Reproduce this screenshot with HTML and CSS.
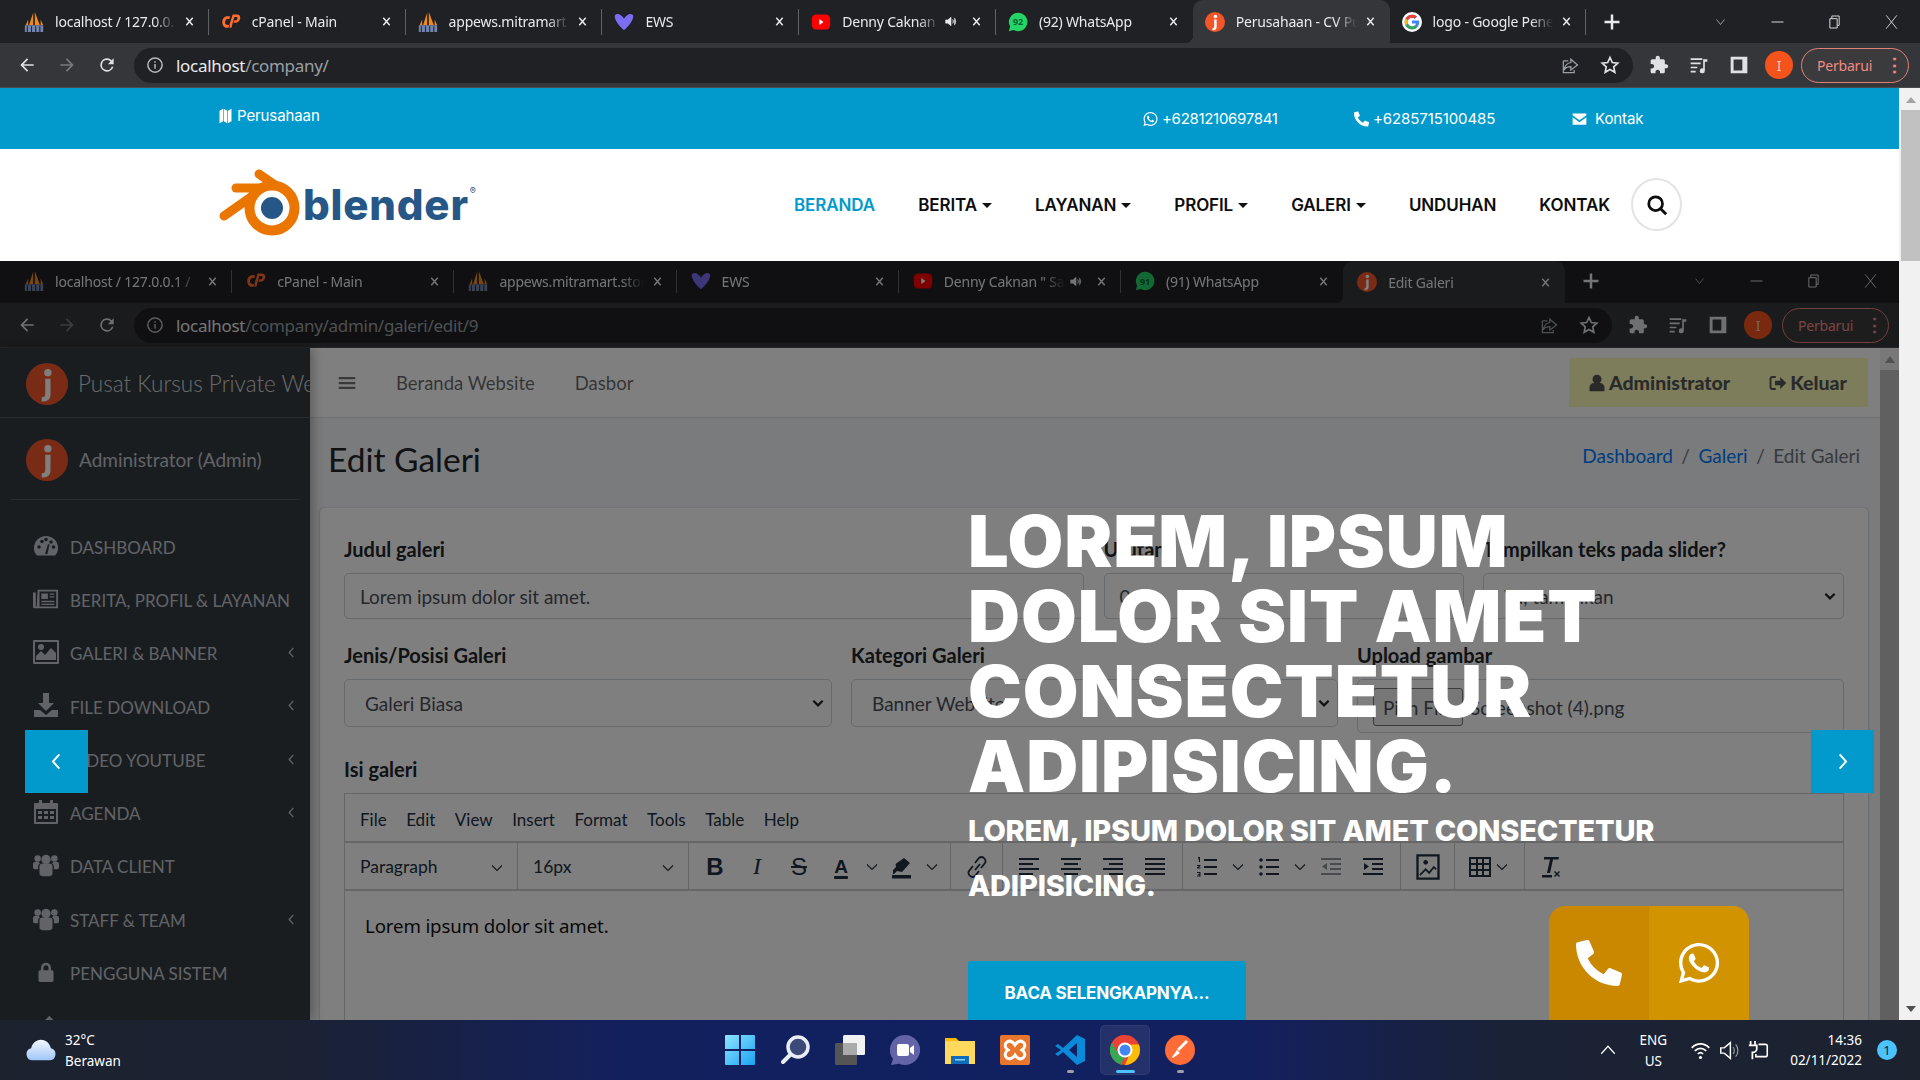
FILE: index.html
```html
<!DOCTYPE html>
<html lang="id">
<head>
<meta charset="utf-8">
<title>Perusahaan - CV</title>
<link rel="stylesheet" href="styles.css">
</head>
<body>
<svg class="sprite" aria-hidden="true">
  <symbol id="back" viewBox="0 0 24 24"><path d="M20 11H7.8l5.6-5.6L12 4l-8 8 8 8 1.4-1.4L7.8 13H20z"/></symbol>
  <symbol id="fwd" viewBox="0 0 24 24"><path d="M12 4l-1.4 1.4 5.6 5.6H4v2h12.2l-5.6 5.6L12 20l8-8z"/></symbol>
  <symbol id="reload" viewBox="0 0 24 24"><path d="M17.65 6.35A8 8 0 1 0 19.73 14h-2.08A6 6 0 1 1 12 6c1.66 0 3.14.69 4.22 1.78L13 11h7V4z"/></symbol>
  <symbol id="info" viewBox="0 0 24 24"><circle cx="12" cy="12" r="9.5" fill="none" stroke="currentColor" stroke-width="2"/><path d="M11 10.500h2V17h-2zM11 7h2v2h-2z"/></symbol>
  <symbol id="share" viewBox="0 0 24 24"><path d="M13 9V5l8 7-8 6v-4c-4 0-6.500 1-8 4 .5-5 3-8 8-9zM4 7h6M4 7v14h13v-3" fill="none" stroke="currentColor" stroke-width="1.500"/></symbol>
  <symbol id="star" viewBox="0 0 24 24"><path d="M12 3l2.800 6 6.600.8-4.900 4.500 1.300 6.500L12 17.500l-5.800 3.300 1.300-6.500L2.600 9.800 9.200 9z" fill="none" stroke="currentColor" stroke-width="2"/></symbol>
  <symbol id="puzzle" viewBox="0 0 24 24"><path d="M20.500 11H19V7c0-1.100-.9-2-2-2h-4V3.500C13 2.120 11.880 1 10.500 1S8 2.120 8 3.500V5H4c-1.100 0-1.990.9-1.990 2v3.800H3.500c1.490 0 2.700 1.210 2.700 2.700s-1.210 2.700-2.700 2.700H2V20c0 1.100.9 2 2 2h3.800v-1.500c0-1.490 1.210-2.700 2.700-2.700s2.700 1.210 2.700 2.700V22H17c1.100 0 2-.9 2-2v-4h1.500c1.380 0 2.500-1.120 2.500-2.500S21.880 11 20.500 11z"/></symbol>
  <symbol id="media" viewBox="0 0 24 24"><path d="M2 4h14v2H2zM2 9h12v2H2zM2 14h8v2H2zM2 19h6v2H2zM17 5h5v3h-3v11a3 3 0 1 1-2-2.800z"/></symbol>
  <symbol id="panel" viewBox="0 0 24 24"><path d="M2 2h20v20H2zM5.500 5.500v13H16v-13z" fill-rule="evenodd"/></symbol>
  <symbol id="chev-d" viewBox="0 0 24 24"><path d="M4 7l8 10 8-10" fill="none" stroke="currentColor" stroke-width="1.300"/></symbol>
  <symbol id="sel-d" viewBox="0 0 24 24"><path d="M4 8l8 8 8-8" fill="none" stroke="currentColor" stroke-width="3.800"/></symbol>
  <symbol id="minim" viewBox="0 0 24 24"><path d="M3 12h18" stroke="currentColor" stroke-width="1.500"/></symbol>
  <symbol id="maxim" viewBox="0 0 24 24"><path d="M5 7h11v14H5zM8 7V3h11v14h-3" fill="none" stroke="currentColor" stroke-width="1.500"/></symbol>
  <symbol id="xclose" viewBox="0 0 24 24"><path d="M4 2l16 20M20 2L4 22" fill="none" stroke="currentColor" stroke-width="1.400"/></symbol>
  <symbol id="tabx" viewBox="0 0 24 24"><path d="M5 4l14 16M19 4L5 20" fill="none" stroke="currentColor" stroke-width="3.200"/></symbol>
  <symbol id="plus" viewBox="0 0 24 24"><path d="M12 3v18M3 12h18" fill="none" stroke="currentColor" stroke-width="3"/></symbol>
  <symbol id="speaker" viewBox="0 0 24 24"><path d="M3 9h4l6-5v16l-6-5H3zM16 8c2 2 2 6 0 8M19 5c3.500 4 3.500 10 0 14" fill="currentColor" stroke="currentColor" stroke-width="1"/></symbol>

  <symbol id="pma" viewBox="0 0 24 24"><path d="M6 16L11 1v15zM13 0l6 16h-6zM2 16l3-7v7zM20 9l3 7h-3z" fill="#f08a1d"/><path d="M1 16h22v8H1z" fill="#7484ad"/><path d="M4 24v-7M9 24v-7M14 24v-7M19 24v-7" stroke="#23262e" stroke-width="1.300"/></symbol>
  <symbol id="cpanel" viewBox="0 0 24 24"><path d="M11 5H7.500C4 5 1.500 8 1.500 12s2 7 6 7H10l1-3.500H8c-3 0-3.500-2-3-4s1.500-3 3-3h2zM14 3h5c3.500 0 4.500 2.500 4 5s-2.500 5-6 5h-2l1-3h1.500c1.500 0 2-1 2.200-2s0-2-1.200-2h-2.500l-3.500 13H9z" fill="#ff6c2c"/></symbol>
  <symbol id="ews" viewBox="0 0 24 24"><path d="M1 4c3-3 7-2 11 4 4-6 8-7 11-4 1 5-5 13-11 18C6 17 0 9 1 4z" fill="#7b6cf0"/></symbol>
  <symbol id="yt" viewBox="0 0 24 24"><rect x="1" y="3" width="22" height="18" rx="5" fill="#f00"/><path d="M10 8.500l5 3.500-5 3.500z" fill="#fff"/></symbol>
  <symbol id="wa92" viewBox="0 0 24 24"><path d="M12 1a11 11 0 0 0-9.500 16.500L1 23l5.700-1.500A11 11 0 1 0 12 1z" fill="#25d366"/></symbol>
  <symbol id="jico" viewBox="0 0 24 24"><circle cx="12" cy="12" r="12" fill="#f4562a"/><circle cx="12.500" cy="5.500" r="2.100" fill="#fff"/><path d="M11 9h3v9c0 3-2 4-5 4v-2.500c1.500 0 2-.5 2-2z" fill="#fff"/></symbol>
  <symbol id="gg" viewBox="0 0 48 48"><circle cx="24" cy="24" r="24" fill="#fff"/><path d="M41 20.500H24v7h9.700C32.800 32 29 34.500 24 34.500c-6 0-10.500-4.800-10.500-10.500S18 13.500 24 13.500c2.700 0 5 1 6.800 2.500l5.200-5.200C32.800 8 28.700 6.500 24 6.500 14.300 6.500 6.500 14.300 6.500 24S14.300 41.500 24 41.500c9 0 17.500-6.500 17.500-17.500 0-1.200-.2-2.400-.5-3.500z" fill="#4285f4"/><path d="M8.500 15.500l5.800 4.300C16 16 19.700 13.500 24 13.500c2.700 0 5 1 6.800 2.500l5.200-5.200C32.800 8 28.700 6.500 24 6.500c-6.800 0-12.600 3.800-15.500 9z" fill="#ea4335"/><path d="M24 41.500c4.500 0 8.700-1.700 11.800-4.600l-5.500-4.600c-1.700 1.300-3.900 2.200-6.300 2.200-4.600 0-8.500-3-9.900-7.200l-5.800 4.500c2.900 5.900 8.900 9.700 15.700 9.700z" fill="#34a853"/><path d="M8.500 15.500A17.400 17.400 0 0 0 8.300 31.800l5.800-4.500a10.400 10.400 0 0 1 .2-7.500z" fill="#fbbc05"/></symbol>

  <symbol id="map" viewBox="0 0 18 24"><path d="M0 4l5.500-3v19L0 23zM6.500 1L11.500 4v19l-5-3zM12.500 4L18 1v19l-5.500 3z"/></symbol>
  <symbol id="wa" viewBox="0 0 448 512"><path d="M380.900 97.100C339 55.100 283.200 32 223.900 32c-122.400 0-222 99.600-222 222 0 39.100 10.200 77.300 29.600 111L0 480l117.700-30.900c32.400 17.700 68.900 27 106.100 27h.1c122.300 0 224.100-99.600 224.100-222 0-59.300-25.200-115-67.100-157zm-157 341.600c-33.200 0-65.700-8.900-94-25.700l-6.700-4-69.800 18.300L72 359.200l-4.400-7c-18.500-29.400-28.200-63.300-28.200-98.200 0-101.700 82.800-184.500 184.600-184.500 49.300 0 95.600 19.200 130.400 54.100 34.800 34.900 56.200 81.200 56.100 130.500 0 101.800-84.900 184.600-186.600 184.600zm101.200-138.200c-5.500-2.800-32.800-16.200-37.900-18-5.100-1.900-8.800-2.800-12.500 2.800-3.700 5.600-14.300 18-17.600 21.800-3.200 3.700-6.500 4.200-12 1.400-32.600-16.300-54-29.100-75.500-66-5.700-9.800 5.700-9.100 16.300-30.300 1.800-3.700.9-6.900-.5-9.700-1.400-2.800-12.500-30.100-17.100-41.200-4.500-10.800-9.100-9.300-12.500-9.500-3.200-.2-6.900-.2-10.600-.2-3.700 0-9.700 1.400-14.800 6.900-5.100 5.600-19.400 19-19.400 46.300 0 27.300 19.900 53.700 22.600 57.400 2.800 3.700 39.100 59.700 94.800 83.800 35.200 15.200 49 16.500 66.600 13.900 10.700-1.600 32.800-13.400 37.400-26.400 4.600-13 4.600-24.100 3.200-26.400-1.300-2.500-5-3.900-10.500-6.600z"/></symbol>
  <symbol id="phone" viewBox="0 0 512 512"><path transform="matrix(-1 0 0 1 512 0)" d="M493.400 24.600l-104-24c-11.300-2.600-22.900 3.300-27.500 13.900l-48 112c-4.200 9.800-1.400 21.300 6.900 28l60.600 49.600c-36 76.700-98.900 140.500-177.200 177.200l-49.600-60.600c-6.800-8.300-18.200-11.100-28-6.900l-112 48C3.900 366.500-2 378.100.6 389.400l24 104C27.100 504.200 36.700 512 48 512c256.100 0 464-207.500 464-464 0-11.200-7.700-20.900-18.600-23.400z"/></symbol>
  <symbol id="mail" viewBox="0 0 24 24"><path d="M1 3h22v3L12 14 1 6zM1 9l11 8 11-8v12H1z"/></symbol>
  <symbol id="search" viewBox="0 0 24 24"><circle cx="10.500" cy="10.500" r="7.500" fill="none" stroke="currentColor" stroke-width="3"/><path d="M16 16l6 6" stroke="currentColor" stroke-width="3.200"/></symbol>
  <symbol id="chev-l" viewBox="0 0 24 24"><path d="M16 2L7 12l9 10" fill="none" stroke="currentColor" stroke-width="2.800"/></symbol>
  <symbol id="chev-r" viewBox="0 0 24 24"><path d="M8 2l9 10-9 10" fill="none" stroke="currentColor" stroke-width="2.800"/></symbol>
  <symbol id="hamb" viewBox="0 0 24 24"><path d="M1 4h22v3H1zM1 10.500h22v3H1zM1 17h22v3H1z"/></symbol>
  <symbol id="user" viewBox="0 0 24 24"><circle cx="12" cy="7" r="6"/><path d="M2 23v-5c0-4 3-6 6-6h8c3 0 6 2 6 6v5z"/></symbol>
  <symbol id="logout" viewBox="0 0 24 24"><path d="M9 4H5a3 3 0 0 0-3 3v10a3 3 0 0 0 3 3h4" fill="none" stroke="currentColor" stroke-width="2.500"/><path d="M8 9h7V4l8 8-8 8v-5H8z"/></symbol>

  <symbol id="s-gauge" viewBox="0 0 24 24"><path d="M12 2A12 12 0 0 0 0 14c0 3 1 5.500 3 7.500h18c2-2 3-4.500 3-7.500A12 12 0 0 0 12 2z"/><g fill="#343a40"><circle cx="5" cy="13" r="1.800"/><circle cx="8" cy="7.500" r="1.800"/><circle cx="12" cy="5.500" r="1.800"/><circle cx="17" cy="8" r="1.800"/><circle cx="19.500" cy="13" r="1.800"/><path d="M11 20l3-10 1.500.5-2 9.500z"/></g></symbol>
  <symbol id="s-news" viewBox="0 0 28 24"><path d="M5 2h22v20H2a2 2 0 0 1-2-2V5h3v15h1z M7 4v16h18V4z" fill-rule="evenodd"/><path d="M9 6h7v6H9zM18 6h5v1.500h-5zM18 9h5v1.500h-5zM9 14h14v1.500H9zM9 17h14v1.500H9z"/></symbol>
  <symbol id="s-img" viewBox="0 0 26 24"><path d="M1 0h24a1 1 0 0 1 1 1v22a1 1 0 0 1-1 1H1a1 1 0 0 1-1-1V1a1 1 0 0 1 1-1zM2 2v20h22V2z" fill-rule="evenodd"/><circle cx="8" cy="7" r="3"/><path d="M3 20v-4l5-5 4 4 6-7 5 5v7z"/></symbol>
  <symbol id="s-dl" viewBox="0 0 24 24"><path d="M9 0h6v10h5l-8 8-8-8h5zM0 17h6l6 5 6-5h6v7H0z"/></symbol>
  <symbol id="s-yt" viewBox="0 0 24 24"><rect y="3" width="24" height="18" rx="4"/></symbol>
  <symbol id="s-cal" viewBox="0 0 24 24"><path d="M5 0h3v3h8V0h3v3h4a1 1 0 0 1 1 1v19a1 1 0 0 1-1 1H1a1 1 0 0 1-1-1V4a1 1 0 0 1 1-1h4zM2 9v13h20V9z" fill-rule="evenodd"/><path d="M4 11h4v3H4zM10 11h4v3h-4zM16 11h4v3h-4zM4 16h4v3H4zM10 16h4v3h-4zM16 16h4v3h-4z"/></symbol>
  <symbol id="s-users" viewBox="0 0 28 24"><circle cx="14" cy="6" r="5"/><circle cx="5" cy="5" r="3.500"/><circle cx="23" cy="5" r="3.500"/><path d="M7 13c0-1.500 1.500-2.500 3-2.500h8c1.500 0 3 1 3 2.500v8c0 2-1 3-3 3h-8c-2 0-3-1-3-3zM0 11c0-1.500 1-2.500 2.500-2.500H6c.5 1 1 1.500 1.500 2-1 .5-2 1.500-2 3v3H2a2 2 0 0 1-2-2zM28 11c0-1.500-1-2.500-2.500-2.500H22c-.5 1-1 1.500-1.500 2 1 .5 2 1.500 2 3v3H26a2 2 0 0 0 2-2z"/></symbol>
  <symbol id="s-lock" viewBox="0 0 24 24"><path d="M6 10V7a6 6 0 0 1 12 0v3h1a2 2 0 0 1 2 2v10a2 2 0 0 1-2 2H5a2 2 0 0 1-2-2V12a2 2 0 0 1 2-2zm3 0h6V7a3 3 0 0 0-6 0z"/></symbol>
  <symbol id="s-pen" viewBox="0 0 24 24"><path d="M16 1l7 7L8 23H1v-7z"/></symbol>

  <symbol id="e-chev" viewBox="0 0 12 12"><path d="M1 3.500l5 5 5-5" fill="none" stroke="currentColor" stroke-width="1.100"/></symbol>
  <symbol id="e-hl" viewBox="0 0 24 24"><path d="M14 3l6 5-8 9-5-1-3 3h-1v-4l3-3-.5-3z"/><path d="M2 20h19v3.500H2z"/></symbol>
  <symbol id="e-link" viewBox="0 0 24 24"><path d="M10 15l5-6M8 11l-4 5a4 4 0 0 0 6 5l4-5M16 13l4-5a4 4 0 0 0-6-5l-4 5" fill="none" stroke="currentColor" stroke-width="1.800"/></symbol>
  <symbol id="e-al" viewBox="0 0 24 24"><path d="M2 3h20v2H2zM2 8h14v2H2zM2 13h20v2H2zM2 18h14v2H2z"/></symbol>
  <symbol id="e-ac" viewBox="0 0 24 24"><path d="M2 3h20v2H2zM5 8h14v2H5zM2 13h20v2H2zM5 18h14v2H5z"/></symbol>
  <symbol id="e-ar" viewBox="0 0 24 24"><path d="M2 3h20v2H2zM8 8h14v2H8zM2 13h20v2H2zM8 18h14v2H8z"/></symbol>
  <symbol id="e-aj" viewBox="0 0 24 24"><path d="M2 3h20v2H2zM2 8h20v2H2zM2 13h20v2H2zM2 18h20v2H2z"/></symbol>
  <symbol id="e-ol" viewBox="0 0 24 24"><path d="M9 4h13v2H9zM9 11h13v2H9zM9 18h13v2H9zM3 2h2v5H3.800V3.500H3zM2 10h3.500v1L3.500 12.500H5.500v1H2v-1l2-1.500H2zM2 17h3.500v4.500H2v-1h2.300v-.8H3v-.8h1.300V18H2z"/></symbol>
  <symbol id="e-ul" viewBox="0 0 24 24"><path d="M9 4h13v2H9zM9 11h13v2H9zM9 18h13v2H9z"/><circle cx="4" cy="5" r="1.800"/><circle cx="4" cy="12" r="1.800"/><circle cx="4" cy="19" r="1.800"/></symbol>
  <symbol id="e-out" viewBox="0 0 24 24"><path d="M2 3h20v2H2zM11 8h11v2H11zM11 13h11v2H11zM2 18h20v2H2zM8 8v7l-5-3.500z"/></symbol>
  <symbol id="e-in" viewBox="0 0 24 24"><path d="M2 3h20v2H2zM11 8h11v2H11zM11 13h11v2H11zM2 18h20v2H2zM3 8v7l5-3.500z"/></symbol>
  <symbol id="e-img" viewBox="0 0 24 24"><path d="M2 1h20v22H2zM4 3v18h16V3z" fill-rule="evenodd"/><circle cx="10" cy="8" r="2"/><path d="M5 19l5-5 3 3 4-5 2 2" fill="none" stroke="currentColor" stroke-width="1.500"/></symbol>
  <symbol id="e-tbl" viewBox="0 0 24 24"><path d="M1 2h22v20H1zM3 4v4h5V4zm7 0v4h4V4zm6 0v4h5V4zM3 10v4h5v-4zm7 0v4h4v-4zm6 0v4h5v-4zM3 16v4h5v-4zm7 0v4h4v-4zm6 0v4h5v-4z" fill-rule="evenodd"/></symbol>
  <symbol id="e-clear" viewBox="0 0 24 24"><path d="M6 2h15l-.5 2.500H15L12 18h-3l3-13.500H6zM4 20h10v2.500H4zM17 16l2 2 2-2 1 1-2 2 2 2-1 1-2-2-2 2-1-1 2-2-2-2z"/></symbol>

  <symbol id="t-cloud" viewBox="0 0 32 24"><defs><linearGradient id="cl" x1="0" y1="0" x2="0" y2="1"><stop offset="0" stop-color="#f4f8ff"/><stop offset="1" stop-color="#9fc6f7"/></linearGradient></defs><path d="M7 23a6.500 6.500 0 0 1-1.500-12.800C6.500 5 10.500 1 16 1s9.500 4 10.500 9.200A6.500 6.500 0 0 1 25 23z" fill="url(#cl)"/></symbol>
  <symbol id="t-win" viewBox="0 0 30 30"><defs><linearGradient id="wb" x1="0" y1="0" x2="1" y2="1"><stop offset="0" stop-color="#8ee4ff"/><stop offset="1" stop-color="#1aa2f0"/></linearGradient></defs><path d="M0 1a1 1 0 0 1 1-1h13v14H0zM16 0h13a1 1 0 0 1 1 1v13H16zM0 16h14v14H1a1 1 0 0 1-1-1zM16 16h14v13a1 1 0 0 1-1 1H16z" fill="url(#wb)"/></symbol>
  <symbol id="t-search" viewBox="0 0 30 30"><circle cx="18" cy="12" r="10" fill="#3b4a78" stroke="#e8edf6" stroke-width="3.500"/><path d="M10 20l-7 7" stroke="#e8edf6" stroke-width="4" stroke-linecap="round"/></symbol>
  <symbol id="t-view" viewBox="0 0 30 30"><rect y="8" width="22" height="22" rx="1.500" fill="#555"/><rect x="8" width="22" height="20" rx="1.500" fill="#f1f1f1"/><rect x="8" y="8" width="14" height="12" fill="#aaa"/></symbol>
  <symbol id="t-chat" viewBox="0 0 30 30"><path d="M15 0a15 15 0 1 1-6 28.700L1 30l2-6A15 15 0 0 1 15 0z" fill="#6264a7"/><rect x="7" y="9" width="12" height="12" rx="2" fill="#fff"/><path d="M20 13l4-3v10l-4-3z" fill="#fff"/></symbol>
  <symbol id="t-folder" viewBox="0 0 30 30"><path d="M0 3h11l3 3h16v23H0z" fill="#ffb900"/><path d="M0 6h30v23H0z" fill="#ffd95c"/><path d="M6 21h18v8H6z" fill="#0f6cbd"/><path d="M10 24h10v1.500H10z" fill="#8fd0ff"/></symbol>
  <symbol id="t-xampp" viewBox="0 0 30 30"><rect width="30" height="30" rx="2" fill="#e8762c"/><path d="M7 7c3-2 6 0 8 3 2-3 5-5 8-3s2 6-1 8c3 2 4 6 1 8s-6 0-8-3c-2 3-5 5-8 3s-2-6 1-8c-3-2-4-6-1-8z" fill="none" stroke="#fff" stroke-width="3"/></symbol>
  <symbol id="t-vs" viewBox="0 0 30 30"><path d="M22 0l8 4v22l-8 4L8 17l-5 4-3-2 6-4-6-4 3-2 5 4zM22 8l-8 7 8 7z" fill="#0a8ad8"/></symbol>
  <symbol id="t-chrome" viewBox="0 0 30 30"><circle cx="15" cy="15" r="15" fill="#ea4335"/><path d="M15 30A15 15 0 0 1 2 7.500L9 20l6 1 1 0-6 9z" fill="#34a853"/><path d="M15 30c8 0 15-7 15-15 0-2-.5-4-1.200-5.500H15l6 6z" fill="#fbbc05"/><path d="M2 7.500L9 19l6-4V0A15 15 0 0 0 2 7.500z" fill="#ea4335"/><circle cx="15" cy="15" r="7.500" fill="#fff"/><circle cx="15" cy="15" r="5.500" fill="#4285f4"/></symbol>
  <symbol id="t-post" viewBox="0 0 30 30"><circle cx="15" cy="15" r="15" fill="#ff6c37"/><path d="M21 5l2 2-9 9-2-2zM12 15l3 3-7 5-1-1z" fill="#fff"/></symbol>
  <symbol id="t-up" viewBox="0 0 24 24"><path d="M3 17L12 7l9 10" fill="none" stroke="currentColor" stroke-width="1.600"/></symbol>
  <symbol id="t-wifi" viewBox="0 0 24 24"><path d="M2 9c6-6 14-6 20 0M5.500 12.500c4-4 9-4 13 0M9 16c2-2 4-2 6 0" fill="none" stroke="currentColor" stroke-width="2"/><circle cx="12" cy="20" r="1.800"/></symbol>
  <symbol id="t-vol" viewBox="0 0 24 24"><path d="M2 9h4l7-6v18l-7-6H2z" fill="none" stroke="currentColor" stroke-width="1.700"/><path d="M16 8c2 2 2 6 0 8M19 5c3.500 4 3.500 10 0 14" fill="none" stroke="currentColor" stroke-width="1.200" opacity=".6"/></symbol>
  <symbol id="t-bat" viewBox="0 0 24 24"><path d="M3 1v5M8 1v5M1 6h9v4a4 4 0 0 1-4 4H5v8" fill="none" stroke="currentColor" stroke-width="2"/><path d="M12 5h8a2 2 0 0 1 2 2v10a2 2 0 0 1-2 2H9v-3" fill="none" stroke="currentColor" stroke-width="1.800"/></symbol>
</svg>

<div class="desk">
  <header class="win win--outer">
    <div class="tabs tabs--outer">
      <div class="tab"><svg class="fav"><use href="#pma"/></svg><span class="tab-t">localhost / 127.0.0.1 / dbco</span><svg class="tab-x"><use href="#tabx"/></svg></div>
      <div class="tab"><svg class="fav"><use href="#cpanel"/></svg><span class="tab-t">cPanel - Main</span><svg class="tab-x"><use href="#tabx"/></svg></div>
      <div class="tab"><svg class="fav"><use href="#pma"/></svg><span class="tab-t">appews.mitramart.store</span><svg class="tab-x"><use href="#tabx"/></svg></div>
      <div class="tab"><svg class="fav"><use href="#ews"/></svg><span class="tab-t">EWS</span><svg class="tab-x"><use href="#tabx"/></svg></div>
      <div class="tab"><svg class="fav"><use href="#yt"/></svg><span class="tab-t">Denny Caknan " Satru</span><svg class="tab-s"><use href="#speaker"/></svg><svg class="tab-x"><use href="#tabx"/></svg></div>
      <div class="tab tab--nosep"><span class="fav-wa"><svg class="fav"><use href="#wa92"/></svg><span class="fav-num">92</span></span><span class="tab-t">(92) WhatsApp</span><svg class="tab-x"><use href="#tabx"/></svg></div>
      <div class="tab tab--active"><svg class="fav"><use href="#jico"/></svg><span class="tab-t">Perusahaan - CV Pusat</span><svg class="tab-x"><use href="#tabx"/></svg></div>
      <div class="tab"><svg class="fav"><use href="#gg"/></svg><span class="tab-t">logo - Google Penelusuran</span><svg class="tab-x"><use href="#tabx"/></svg></div>
      <svg class="tab-plus"><use href="#plus"/></svg>
      <div class="wctl"><svg class="wc wc--chev"><use href="#chev-d"/></svg><svg class="wc"><use href="#minim"/></svg><svg class="wc"><use href="#maxim"/></svg><svg class="wc"><use href="#xclose"/></svg></div>
    </div>
    <div class="bar">
      <svg class="bi"><use href="#back"/></svg><svg class="bi bi--off"><use href="#fwd"/></svg><svg class="bi"><use href="#reload"/></svg>
      <div class="omni"><svg class="omni-i"><use href="#info"/></svg><span class="url"><span class="url-h">localhost</span>/company/</span><svg class="omni-a"><use href="#share"/></svg><svg class="omni-b"><use href="#star"/></svg></div>
      <svg class="bi bi--ext"><use href="#puzzle"/></svg><svg class="bi"><use href="#media"/></svg><svg class="bi"><use href="#panel"/></svg>
      <span class="ava">I</span>
      <span class="pill">Perbarui<span class="dots">⋮</span></span>
    </div>
  </header>

  <div class="viewport">
    <main class="page">
      <div class="topbar">
        <span class="tb-brand"><svg class="tb-ic"><use href="#map"/></svg>Perusahaan</span>
        <span class="tb-item tb-item--wa"><svg class="tb-ic"><use href="#wa"/></svg>+6281210697841</span>
        <span class="tb-item tb-item--ph"><svg class="tb-ic"><use href="#phone"/></svg>+6285715100485</span>
        <span class="tb-item tb-item--ml"><svg class="tb-ic"><use href="#mail"/></svg>Kontak</span>
      </div>
      <nav class="nav">
        <div class="logo">
          <svg class="logo-mark" viewBox="0 0 84 72">
            <g fill="none" stroke="#ea7600" stroke-linecap="round" stroke-width="9">
              <path d="M40 5L66 23"/><path d="M17 19h30"/><path d="M5 47L32 28"/>
            </g>
            <path d="M30 20l30-1 10 24-40 0z" fill="#ea7600"/>
            <circle cx="53" cy="39" r="22.500" fill="#fff" stroke="#ea7600" stroke-width="10"/>
            <circle cx="53" cy="39" r="11" fill="#265787"/>
          </svg>
          <span class="logo-t">blender<sup class="logo-r">®</sup></span>
        </div>
        <ul class="menu">
          <li class="menu-i menu-i--on">BERANDA</li>
          <li class="menu-i">BERITA <span class="caret"></span></li>
          <li class="menu-i">LAYANAN<span class="caret"></span></li>
          <li class="menu-i">PROFIL<span class="caret"></span></li>
          <li class="menu-i">GALERI <span class="caret"></span></li>
          <li class="menu-i">UNDUHAN</li>
          <li class="menu-i">KONTAK</li>
        </ul>
        <span class="srch"><svg class="srch-i"><use href="#search"/></svg></span>
      </nav>

      <section class="hero">
        <div class="win win--inner">
          <div class="tabs tabs--inner">
            <div class="tab"><svg class="fav"><use href="#pma"/></svg><span class="tab-t">localhost / 127.0.0.1 /</span><svg class="tab-x"><use href="#tabx"/></svg></div>
            <div class="tab"><svg class="fav"><use href="#cpanel"/></svg><span class="tab-t">cPanel - Main</span><svg class="tab-x"><use href="#tabx"/></svg></div>
            <div class="tab"><svg class="fav"><use href="#pma"/></svg><span class="tab-t">appews.mitramart.store</span><svg class="tab-x"><use href="#tabx"/></svg></div>
            <div class="tab"><svg class="fav"><use href="#ews"/></svg><span class="tab-t">EWS</span><svg class="tab-x"><use href="#tabx"/></svg></div>
            <div class="tab"><svg class="fav"><use href="#yt"/></svg><span class="tab-t">Denny Caknan " Satru 2</span><svg class="tab-s"><use href="#speaker"/></svg><svg class="tab-x"><use href="#tabx"/></svg></div>
            <div class="tab tab--nosep"><span class="fav-wa"><svg class="fav"><use href="#wa92"/></svg><span class="fav-num">91</span></span><span class="tab-t">(91) WhatsApp</span><svg class="tab-x"><use href="#tabx"/></svg></div>
            <div class="tab tab--active"><svg class="fav"><use href="#jico"/></svg><span class="tab-t">Edit Galeri</span><svg class="tab-x"><use href="#tabx"/></svg></div>
            <svg class="tab-plus"><use href="#plus"/></svg>
            <div class="wctl"><svg class="wc wc--chev"><use href="#chev-d"/></svg><svg class="wc"><use href="#minim"/></svg><svg class="wc"><use href="#maxim"/></svg><svg class="wc"><use href="#xclose"/></svg></div>
          </div>
          <div class="bar">
            <svg class="bi"><use href="#back"/></svg><svg class="bi bi--off"><use href="#fwd"/></svg><svg class="bi"><use href="#reload"/></svg>
            <div class="omni"><svg class="omni-i"><use href="#info"/></svg><span class="url"><span class="url-h">localhost</span>/company/admin/galeri/edit/9</span><svg class="omni-a"><use href="#share"/></svg><svg class="omni-b"><use href="#star"/></svg></div>
            <svg class="bi bi--ext"><use href="#puzzle"/></svg><svg class="bi"><use href="#media"/></svg><svg class="bi"><use href="#panel"/></svg>
            <span class="ava">I</span>
            <span class="pill">Perbarui<span class="dots">⋮</span></span>
          </div>

          <div class="admin">
            <aside class="side">
              <div class="side-brand"><svg class="side-ava"><use href="#jico"/></svg><span class="side-name">Pusat Kursus Private Website</span></div>
              <div class="side-user"><svg class="side-ava"><use href="#jico"/></svg><span class="side-uname">Administrator (Admin)</span></div>
              <ul class="side-menu">
                <li class="sm"><svg class="sm-i"><use href="#s-gauge"/></svg>DASHBOARD</li>
                <li class="sm"><svg class="sm-i"><use href="#s-news"/></svg><span class="sm-clip">BERITA, PROFIL &amp; LAYANAN</span></li>
                <li class="sm"><svg class="sm-i"><use href="#s-img"/></svg>GALERI &amp; BANNER<svg class="sm-c"><use href="#chev-l"/></svg></li>
                <li class="sm"><svg class="sm-i"><use href="#s-dl"/></svg>FILE DOWNLOAD<svg class="sm-c"><use href="#chev-l"/></svg></li>
                <li class="sm"><svg class="sm-i"><use href="#s-yt"/></svg>VIDEO YOUTUBE<svg class="sm-c"><use href="#chev-l"/></svg></li>
                <li class="sm"><svg class="sm-i"><use href="#s-cal"/></svg>AGENDA<svg class="sm-c"><use href="#chev-l"/></svg></li>
                <li class="sm"><svg class="sm-i"><use href="#s-users"/></svg>DATA CLIENT</li>
                <li class="sm"><svg class="sm-i"><use href="#s-users"/></svg>STAFF &amp; TEAM<svg class="sm-c"><use href="#chev-l"/></svg></li>
                <li class="sm"><svg class="sm-i sm-i--s"><use href="#s-lock"/></svg>PENGGUNA SISTEM</li>
                <li class="sm"><svg class="sm-i sm-i--s"><use href="#s-pen"/></svg>KONFIGURASI</li>
              </ul>
            </aside>
            <div class="main">
              <div class="mnav">
                <svg class="mnav-h"><use href="#hamb"/></svg>
                <span class="mnav-l">Beranda Website</span>
                <span class="mnav-l">Dasbor</span>
                <div class="mnav-box">
                  <span class="mnav-b"><svg class="mnav-i"><use href="#user"/></svg>Administrator</span>
                  <span class="mnav-b"><svg class="mnav-i"><use href="#logout"/></svg>Keluar</span>
                </div>
              </div>
              <div class="chead">
                <h1 class="ctitle">Edit Galeri</h1>
                <div class="crumb"><span class="crumb-a">Dashboard</span><span class="crumb-s">/</span><span class="crumb-a">Galeri</span><span class="crumb-s">/</span><span>Edit Galeri</span></div>
              </div>
              <div class="card">
                <div class="frow frow--a">
                  <div class="fld"><label class="lbl">Judul galeri</label><div class="ctl">Lorem ipsum dolor sit amet.</div></div>
                  <div class="fld"><label class="lbl">Urutan</label><div class="ctl">0</div></div>
                  <div class="fld"><label class="lbl">Tampilkan teks pada slider?</label><div class="ctl ctl--sel">Ya, tampilkan<svg class="sel-c"><use href="#sel-d"/></svg></div></div>
                </div>
                <div class="frow frow--b">
                  <div class="fld"><label class="lbl">Jenis/Posisi Galeri</label><div class="ctl ctl--sel ctl--tall">Galeri Biasa<svg class="sel-c"><use href="#sel-d"/></svg></div></div>
                  <div class="fld"><label class="lbl">Kategori Galeri</label><div class="ctl ctl--sel ctl--tall">Banner Website<svg class="sel-c"><use href="#sel-d"/></svg></div></div>
                  <div class="fld"><label class="lbl">Upload gambar</label><div class="ctl ctl--file"><span class="filebtn">Pilih File</span><span>Screenshot (4).png</span></div></div>
                </div>
                <div class="fld"><label class="lbl">Isi galeri</label>
                  <div class="editor">
                    <div class="ed-menu"><span>File</span><span>Edit</span><span>View</span><span>Insert</span><span>Format</span><span>Tools</span><span>Table</span><span>Help</span></div>
                    <div class="ed-bar">
                      <div class="eg eg--par">Paragraph<svg class="ec ec--end"><use href="#e-chev"/></svg></div>
                      <div class="eg eg--size">16px<svg class="ec ec--end"><use href="#e-chev"/></svg></div>
                      <div class="eg eg--fmt">
                        <span class="eb eb--b">B</span><span class="eb eb--i">I</span><span class="eb eb--s">S</span><span class="eb eb--a">A</span><svg class="ec"><use href="#e-chev"/></svg><span class="eb eb--hl"><svg class="ei"><use href="#e-hl"/></svg></span><svg class="ec"><use href="#e-chev"/></svg>
                      </div>
                      <div class="eg eg--link"><svg class="ei"><use href="#e-link"/></svg></div>
                      <div class="eg eg--al"><span class="eb"><svg class="ei"><use href="#e-al"/></svg></span><span class="eb"><svg class="ei"><use href="#e-ac"/></svg></span><span class="eb"><svg class="ei"><use href="#e-ar"/></svg></span><span class="eb"><svg class="ei"><use href="#e-aj"/></svg></span></div>
                      <div class="eg eg--ls"><span class="eb"><svg class="ei"><use href="#e-ol"/></svg></span><svg class="ec"><use href="#e-chev"/></svg><span class="eb"><svg class="ei"><use href="#e-ul"/></svg></span><svg class="ec"><use href="#e-chev"/></svg><span class="eb eb--dim"><svg class="ei"><use href="#e-out"/></svg></span><span class="eb"><svg class="ei"><use href="#e-in"/></svg></span></div>
                      <div class="eg eg--img"><svg class="ei ei--l"><use href="#e-img"/></svg></div>
                      <div class="eg eg--tb"><svg class="ei"><use href="#e-tbl"/></svg><svg class="ec"><use href="#e-chev"/></svg></div>
                      <div class="eg eg--cl"><svg class="ei"><use href="#e-clear"/></svg></div>
                    </div>
                    <div class="ed-body">Lorem ipsum dolor sit amet.</div>
                  </div>
                </div>
              </div>
            </div>
            <div class="isb"><span class="isb-u"></span><span class="isb-t"></span></div>
          </div>
        </div>

        <div class="shade"></div>

        <div class="cap">
          <h2 class="cap-t">LOREM, IPSUM<br>DOLOR SIT AMET<br>CONSECTETUR<br>ADIPISICING.</h2>
          <p class="cap-s">LOREM, IPSUM DOLOR SIT AMET CONSECTETUR<br>ADIPISICING.</p>
          <span class="cap-b">BACA SELENGKAPNYA...</span>
        </div>
        <span class="arrow arrow--l"><svg class="arrow-i"><use href="#chev-l"/></svg></span>
        <span class="arrow arrow--r"><svg class="arrow-i"><use href="#chev-r"/></svg></span>
        <div class="fab">
          <span class="fab-h fab-h--a"><svg class="fab-i"><use href="#phone"/></svg></span>
          <span class="fab-h fab-h--b"><svg class="fab-i"><use href="#wa"/></svg></span>
        </div>
      </section>
    </main>
    <div class="sb"><span class="sb-u"></span><span class="sb-t"></span><span class="sb-f"></span><span class="sb-d"></span></div>
  </div>

  <footer class="task">
    <div class="task-l"><svg class="cloud"><use href="#t-cloud"/></svg><div class="wx"><span>32°C</span><span>Berawan</span></div></div>
    <div class="task-c">
      <span class="tk"><svg class="tk-i"><use href="#t-win"/></svg></span>
      <span class="tk"><svg class="tk-i"><use href="#t-search"/></svg></span>
      <span class="tk"><svg class="tk-i"><use href="#t-view"/></svg></span>
      <span class="tk"><svg class="tk-i"><use href="#t-chat"/></svg></span>
      <span class="tk"><svg class="tk-i"><use href="#t-folder"/></svg></span>
      <span class="tk"><svg class="tk-i"><use href="#t-xampp"/></svg></span>
      <span class="tk tk--run"><svg class="tk-i"><use href="#t-vs"/></svg></span>
      <span class="tk tk--on"><svg class="tk-i"><use href="#t-chrome"/></svg></span>
      <span class="tk tk--run"><svg class="tk-i"><use href="#t-post"/></svg></span>
    </div>
    <div class="task-r">
      <svg class="tr-up"><use href="#t-up"/></svg>
      <div class="lang"><span>ENG</span><span>US</span></div>
      <svg class="tr-i"><use href="#t-wifi"/></svg><svg class="tr-i"><use href="#t-vol"/></svg><svg class="tr-i"><use href="#t-bat"/></svg>
      <div class="clock"><span>14:36</span><span>02/11/2022</span></div>
      <span class="badge">1</span>
    </div>
  </footer>
</div>
</body>
</html>
```

FILE: styles.css
```css
* { box-sizing: border-box; }
html, body { margin: 0; padding: 0; height: 100%; overflow: hidden; background: #202124; }
ul { list-style: none; margin: 0; padding: 0; }
h1, h2, p { margin: 0; }
svg { display: block; flex: none; fill: currentColor; }
.sprite { position: absolute; width: 0; height: 0; overflow: hidden; }

.desk { width: 1920px; height: 1080px; display: flex; flex-direction: column; overflow: hidden; font-family: "Noto Sans", sans-serif; }

/* browser chrome */
.win { flex: none; background: #202124; color: #e8eaed; }
.tabs { display: flex; align-items: stretch; height: 43px; background: #202124; }
.tabs--outer { padding-left: 12px; }
.tabs--inner { padding-left: 10px; height: 42px; padding-bottom: 2px; }
.tab { position: relative; display: flex; align-items: center; padding: 0 14px 0 12px; font-size: 14px; letter-spacing: -.2px; color: #e8eaed; }
.tabs--outer .tab { width: 196.800px; }
.tabs--inner .tab { width: 222.200px; padding-left: 14px; }
.tabs--inner .tab--active { margin-bottom: -2px; }
.tab::after { content: ""; position: absolute; right: 0; top: 9px; bottom: 8px; width: 1px; background: #5f6368; }
.tab--nosep::after, .tab--active::after { display: none; }
.tab--active { background: #35363a; border-radius: 10px 10px 0 0; }
.tab--active::before { content: ""; position: absolute; left: -8px; bottom: 0; width: 8px; height: 8px; background: radial-gradient(circle at 0 0, transparent 8px, #35363a 8.500px); }
.fav { width: 20px; height: 20px; }
.fav-wa { position: relative; display: block; width: 20px; height: 20px; flex: none; }
.fav-num { position: absolute; inset: 0; display: flex; align-items: center; justify-content: center; font-size: 9px; font-weight: 700; color: #063; }
.tab-t { flex: 1; min-width: 0; margin-left: 11px; white-space: nowrap; overflow: hidden; -webkit-mask-image: linear-gradient(to left, transparent 0, #000 22px); mask-image: linear-gradient(to left, transparent 0, #000 22px); }
.tab-x { width: 11px; height: 13px; margin-left: 8px; }
.tab-s { width: 13px; height: 13px; margin-left: 4px; margin-right: 6px; }
.tab-plus { width: 20px; height: 20px; align-self: center; margin-left: 16px; color: #e8eaed; }
.wctl { margin-left: auto; display: flex; align-items: center; }
.wc { width: 57px; height: 16px; color: #d6d7d9; }
.wc--chev { height: 12px; }

.bar { display: flex; align-items: center; height: 45px; background: #35363a; border-bottom: 1px solid #4a4b4f; padding: 0 10px 0 17px; }
.bi { width: 20px; height: 20px; margin-right: 20px; color: #dfe1e5; }
.bi--off { color: #77797d; }
.omni { flex: 1; display: flex; align-items: center; height: 35px; background: #202124; border-radius: 18px; margin-left: -3px; padding: 0 13px 0 12px; }
.omni-i { width: 18px; height: 18px; color: #b6b8bb; }
.url { flex: 1; margin-left: 12px; font-size: 17px; letter-spacing: -.3px; color: #9aa0a6; }
.url-h { color: #e8eaed; }
.omni-a { width: 20px; height: 20px; margin-right: 20px; color: #9aa0a6; }
.omni-b { width: 20px; height: 20px; color: #dfe1e5; }
.bi--ext { margin-left: 16px; }
.ava { width: 28px; height: 28px; margin-left: -4px; border-radius: 50%; background: #f4531c; color: #f6c9b6; font-size: 14px; display: flex; align-items: center; justify-content: center; flex: none; }
.pill { width: 107px; height: 35px; margin-left: 10px; border: 1.500px solid #e0827a; border-radius: 18px; display: flex; align-items: center; justify-content: space-between; padding: 0 3px 0 15px; color: #f28b82; font-size: 14px; letter-spacing: -.2px; background: #3b3a3d; flex: none; }
.win--outer .pill { width: 108px; margin-left: 8px; margin-right: 1px; }
.dots { font-size: 19px; font-weight: 700; line-height: 1; width: 22px; text-align: center; }

/* outer page */
.viewport { flex: 1; min-height: 0; display: flex; }
.page { flex: 1; min-width: 0; display: flex; flex-direction: column; background: #fff; }
.sb { width: 21px; flex: none; display: flex; flex-direction: column; align-items: center; background: #f1f1f1; padding-left: 2px; }
.sb-u, .sb-d { flex: none; width: 0; height: 0; border-left: 5px solid transparent; border-right: 5px solid transparent; }
.sb-u { border-bottom: 6px solid #a3a3a3; margin: 9px 0 7px; }
.sb-t { width: 100%; height: 151px; background: #c1c1c1; }
.sb-f { flex: 1; }
.sb-d { border-top: 6px solid #505050; margin: 0 0 8px; }

.topbar { height: 61px; flex: none; background: #029acc; color: #fff; display: flex; font-family: "Inter", sans-serif; font-size: 15px; letter-spacing: -.1px; padding-left: 218px; }
.tb-brand, .tb-item { display: flex; align-items: center; height: 100%; }
.tb-brand { padding-bottom: 6px; width: 925px; }
.tb-item { white-space: nowrap; }
.tb-item--wa { width: 211px; letter-spacing: -.3px; }
.tb-item--ph { width: 218px; }
.tb-ic { width: 15px; height: 16px; margin-right: 4px; }
.tb-item--ml .tb-ic { margin-right: 8px; }

.nav { height: 112px; flex: none; display: flex; align-items: center; background: #fff; padding-left: 219px; font-family: "Inter", sans-serif; }
.logo { display: flex; align-items: center; width: 575px; }
.logo-mark { width: 84px; height: 72px; margin-top: -1px; }
.logo-t { position: relative; font-weight: 800; font-size: 42px; letter-spacing: .8px; color: #265787; line-height: 1; margin-top: 0; }
.logo-r { position: absolute; left: 100%; top: 2px; font-size: 9px; font-weight: 400; letter-spacing: 0; line-height: 1; margin-left: 1px; }
.menu { display: flex; align-items: center; gap: 43px; }
.menu-i { font-size: 17px; font-weight: 600; letter-spacing: -.1px; color: #0d0d0d; white-space: nowrap; display: flex; align-items: center; }
.menu-i--on { color: #029acc; }
.caret { width: 0; height: 0; margin-left: 5px; border-left: 5px solid transparent; border-right: 5px solid transparent; border-top: 5px solid #111; }
.srch { width: 51px; height: 53px; margin-left: 21px; margin-top: -1px; border: 2px solid #e3e3e3; border-radius: 50%; display: flex; align-items: center; justify-content: center; color: #0d0d0d; flex: none; }
.srch-i { width: 22px; height: 22px; }

/* hero */
.hero { position: relative; flex: 1; min-height: 0; overflow: hidden; }
.win--inner { display: flex; flex-direction: column; height: 100%; }
.shade { position: absolute; inset: 0; background: rgba(0, 0, 0, .5); }

.cap { position: absolute; left: 968px; top: 242px; color: #fff; font-family: "Inter", sans-serif; }
.cap-t { font-size: 72px; line-height: 75px; font-weight: 900; letter-spacing: .9px; white-space: nowrap; }
.cap-s { font-size: 29px; line-height: 55px; font-weight: 800; letter-spacing: -.2px; white-space: nowrap; }
.cap-b { display: flex; align-items: center; justify-content: center; width: 278px; height: 62px; margin-top: 48px; padding-top: 2px; background: #029acc; border-radius: 3px; font-size: 17px; font-weight: 700; letter-spacing: -.2px; }
.arrow { position: absolute; top: 469px; width: 63px; height: 63px; background: #029acc; color: #fff; display: flex; align-items: center; justify-content: center; }
.arrow--l { left: 25px; }
.arrow--r { right: 25px; }
.arrow-i { width: 17px; height: 17px; }
.fab { position: absolute; left: 1549px; top: 645px; width: 200px; height: 150px; display: flex; border-radius: 16px; overflow: hidden; color: #fff; }
.fab-h { flex: 1; display: flex; justify-content: center; padding-top: 34px; }
.fab-h--a { background: #c98800; }
.fab-h--b { background: #d19400; }
.fab-i { width: 46px; height: 46px; }

/* admin */
.admin { flex: 1; min-height: 0; display: flex; background: #f4f6f9; font-family: "Lato", sans-serif; color: #212529; }
.side { width: 310px; flex: none; background: #343a40; color: #c2c7d0; box-shadow: 4px 0 10px rgba(0,0,0,.25); position: relative; overflow: hidden; }
.side-brand { height: 70px; display: flex; align-items: center; padding-left: 26px; padding-top: 2px; border-bottom: 1px solid #4b545c; white-space: nowrap; overflow: hidden; }
.side-ava { width: 42px; height: 42px; margin-right: 10px; }
.side-name { font-size: 22.500px; font-weight: 300; color: rgba(255,255,255,.8); }
.side-user { height: 82px; margin: 0 10px; padding-left: 16px; padding-top: 2px; display: flex; align-items: center; border-bottom: 1px solid #4f5962; }
.side-uname { font-size: 19px; font-weight: 400; margin-left: 1px; }
.side-menu { padding-top: 20.500px; }
.sm { height: 53.300px; display: flex; align-items: center; position: relative; padding-left: 70px; font-size: 17px; white-space: nowrap; }
.sm-i { position: absolute; left: 33px; top: 13px; width: 26px; height: 24px; }
.sm-i--s { width: 20px; left: 36px; }
.sm-clip { display: block; width: 224px; overflow: hidden; }
.sm-c { position: absolute; left: 286px; top: 18px; width: 11px; height: 15px; }

.main { flex: 1; min-width: 0; display: flex; flex-direction: column; }
.isb { width: 19px; flex: none; display: flex; flex-direction: column; align-items: center; background: #f1f1f1; }
.isb-u { flex: none; width: 0; height: 0; margin: 8px 0 7px; border-left: 5px solid transparent; border-right: 5px solid transparent; border-bottom: 7px solid #a3a3a3; }
.isb-t { flex: 1; width: 100%; background: #c1c1c1; }
.mnav { height: 70px; flex: none; display: flex; align-items: center; background: #fff; border-bottom: 1px solid #dee2e6; padding-left: 28px; color: rgba(0,0,0,.6); font-size: 18.500px; }
.mnav-h { width: 18px; height: 18px; margin-right: 40px; color: rgba(0,0,0,.55); }
.mnav-l { margin-right: 40px; white-space: nowrap; }
.mnav-box { margin-left: auto; margin-right: 12px; width: 299px; height: 49px; background: #fbfbb9; display: flex; align-items: center; padding-left: 19px; font-size: 19.500px; font-weight: 900; color: #555; gap: 39px; }
.mnav-b { display: flex; align-items: center; gap: 3px; }
.mnav-i { width: 18px; height: 18px; }

.chead { height: 90px; flex: none; display: flex; justify-content: space-between; align-items: flex-start; padding: 22px 20px 0 18px; }
.ctitle { font-size: 33.500px; font-weight: 400; line-height: 38px; }
.crumb { display: flex; gap: 8.500px; font-size: 19px; margin-top: 4px; color: #6c757d; }
.crumb-a { color: #007bff; }
.crumb-s { color: #6c757d; }

.card { flex: 1; margin: 0 12px 0 10px; background: #fff; border-radius: 4px 4px 0 0; box-shadow: 0 0 1px rgba(0,0,0,.25), 0 1px 3px rgba(0,0,0,.2); padding: 29px 24px 0; }
.frow { display: grid; column-gap: 19.500px; margin-bottom: 24px; align-items: start; }
.frow--a { grid-template-columns: 740px 360px 361px; }
.frow--b { grid-template-columns: 488px 487px 487px; column-gap: 19px; }
.fld { min-width: 0; }
.lbl { display: block; font-size: 20px; font-weight: 700; line-height: 24px; margin-bottom: 12px; white-space: nowrap; }
.ctl { height: 46px; display: flex; align-items: center; position: relative; padding: 0 15px; font-size: 19px; color: #495057; border: 1px solid #ced4da; border-radius: 5px; background: #fff; white-space: nowrap; }
.ctl--sel { padding: 0 20px; }
.ctl--tall { height: 48px; }
.sel-c { position: absolute; right: 6px; top: 50%; margin-top: -7px; width: 14px; height: 14px; color: #222; }
.ctl--file { height: 54px; padding: 0 15px; align-items: flex-start; padding-top: 8px; }
.filebtn { width: 90px; height: 38px; margin-right: 7px; flex: none; background: #efefef; border: 1px solid #767676; border-radius: 3px; display: flex; align-items: center; justify-content: center; }
.ctl--file span:last-child { margin-top: 8px; }

.editor { border: 1px solid #ccc; border-bottom: 0; height: 400px; }
.ed-menu { height: 49px; display: flex; align-items: center; padding: 3px 0 0 15px; font-size: 17px; color: #222f3e; border-bottom: 2px solid #ccc; gap: 19.500px; }
.ed-bar { height: 48px; display: flex; align-items: stretch; border-bottom: 2px solid #ccc; color: #222f3e; }
.eg { display: flex; align-items: center; border-right: 1px solid #ccc; padding-top: 1px; }
.eg--par, .eg--size { position: relative; font-size: 17.500px; padding-left: 15px; }
.eg--par { width: 173px; }
.eg--size { width: 171px; }
.eg--fmt { width: 262px; padding-left: 5px; }
.eg--link { width: 52px; justify-content: center; }
.eg--al { width: 180px; padding-left: 5px; }
.eg--ls { width: 218px; padding-left: 3px; }
.eg--img { width: 54px; justify-content: center; }
.eg--tb { width: 70px; padding-left: 13px; }
.eg--cl { border-right: 0; padding-left: 13px; }
.eb { width: 42px; height: 100%; display: flex; align-items: center; justify-content: center; flex: none; font-size: 24px; font-family: "Liberation Sans", sans-serif; }
.eb--b { font-weight: 700; }
.eb--i { font-family: "Liberation Serif", serif; font-style: italic; }
.eb--s { text-decoration: line-through; }
.eb--a { font-size: 19px; font-weight: 700; text-decoration: underline; text-decoration-thickness: 3px; text-underline-offset: 3px; }
.eb--hl { width: 40px; }
.eb--dim { opacity: .5; }
.ei { width: 24px; height: 24px; }
.ei--l { width: 28px; height: 28px; }
.ec { width: 20px; height: 12px; flex: none; color: #222f3e; }
.ec--end { position: absolute; right: 10px; top: 19px; }
.ed-body { padding: 22px 20px; font-size: 18.700px; color: #111; font-family: "Noto Sans", sans-serif; letter-spacing: -.15px; line-height: 26px; }

/* taskbar */
.task { height: 60px; flex: none; display: grid; grid-template-columns: 1fr auto 1fr; align-items: center; background: linear-gradient(90deg, #1c222e 0, #1b2233 300px, #13205e 620px, #102060 960px, #13205e 1250px, #1a2236 1500px, #1c222e 1920px); color: #fff; font-family: "Noto Sans", sans-serif; font-size: 13.500px; }
.task-l { display: flex; align-items: center; padding-left: 26px; }
.cloud { width: 30px; height: 24px; margin-right: 9px; }
.wx, .lang, .clock { display: flex; flex-direction: column; gap: 3px; line-height: 18px; }
.task-c { display: flex; }
.tk { position: relative; width: 55px; height: 50px; display: flex; align-items: center; justify-content: center; border-radius: 5px; }
.tk-i { width: 30px; height: 30px; }
.tk--run::after, .tk--on::after { content: ""; position: absolute; bottom: 2px; left: 50%; height: 3px; border-radius: 2px; }
.tk--run::after { width: 7px; margin-left: -3px; background: #9aa0ad; }
.tk--on { background: rgba(255,255,255,.08); box-shadow: inset 0 0 0 1px rgba(255,255,255,.05); width: 50px; margin: 0 2.500px; }
.tk--on::after { width: 19px; margin-left: -9px; background: #4cc2ff; }
.task-r { display: flex; align-items: center; justify-content: flex-end; padding-right: 23px; }
.tr-up { width: 18px; height: 18px; margin-right: 23px; }
.lang { align-items: center; margin-right: 23px; }
.tr-i { width: 21px; height: 21px; margin-right: 8px; }
.clock { align-items: flex-end; margin: 0 15px 0 13px; gap: 2px; }
.badge { width: 20px; height: 20px; border-radius: 50%; background: #4cc2ff; color: #10203a; display: flex; align-items: center; justify-content: center; font-size: 13px; }
```
